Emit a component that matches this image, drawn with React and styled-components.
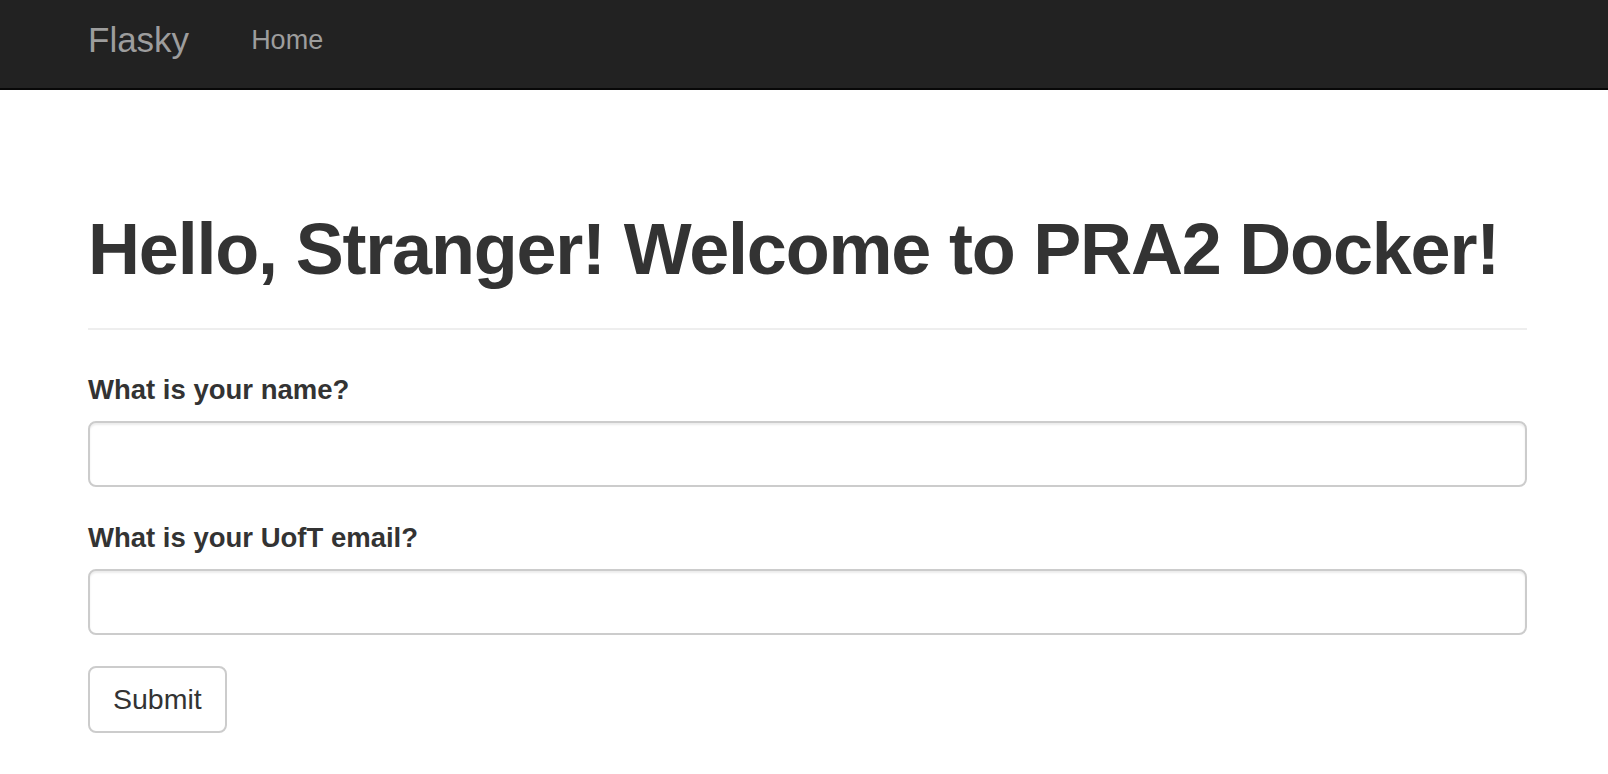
import React from "react";
import styled, { createGlobalStyle } from "styled-components";

const GlobalStyle = createGlobalStyle`
  html, body {
    margin: 0;
    padding: 0;
    background: #fff;
    font-family: "Liberation Sans", Arial, sans-serif;
    color: #333;
  }
`;

const Navbar = styled.nav`
  box-sizing: border-box;
  height: 90px;
  background: #222;
  border-bottom: 2px solid #080808;
  display: flex;
  align-items: flex-start;
  padding: 20px 0 0 88px;
`;

const Brand = styled.a`
  font-size: 35px;
  line-height: 40px;
  color: #9d9d9d;
  text-decoration: none;
  margin-right: 62px;
`;

const NavLink = styled.a`
  font-size: 27px;
  line-height: 40px;
  color: #9d9d9d;
  text-decoration: none;
`;

const Container = styled.main`
  margin-left: 88px;
  width: 1439px;
`;

const PageHeader = styled.div`
  padding-top: 120px;
  padding-bottom: 39px;
  border-bottom: 2px solid #eee;
`;

const Title = styled.h1`
  margin: 0;
  font-size: 72px;
  line-height: 79px;
  font-weight: 700;
  letter-spacing: -1.2px;
  color: #333;
`;

const Form = styled.form`
  padding-top: 40px;
`;

const FormGroup = styled.div`
  margin-bottom: 31px;
`;

const Label = styled.label`
  display: block;
  font-size: 27.5px;
  line-height: 40px;
  font-weight: 700;
  margin-bottom: 11px;
`;

const Input = styled.input`
  display: block;
  box-sizing: border-box;
  width: 100%;
  height: 66px;
  border: 2px solid #ccc;
  border-radius: 8px;
  box-shadow: inset 0 2px 2px rgba(0, 0, 0, 0.075);
  padding: 0 24px;
  font-size: 28px;
  font-family: inherit;
  outline: none;
`;

const Button = styled.button`
  box-sizing: border-box;
  height: 67px;
  padding: 0 23px;
  background: #fff;
  border: 2px solid #ccc;
  border-radius: 8px;
  font-family: inherit;
  font-size: 28.5px;
  line-height: 63px;
  color: #333;
  cursor: pointer;
`;

export default function App() {
  return (
    <>
      <GlobalStyle />
      <Navbar>
        <Brand href="#">Flasky</Brand>
        <NavLink href="#">Home</NavLink>
      </Navbar>
      <Container>
        <PageHeader>
          <Title>Hello, Stranger! Welcome to PRA2 Docker!</Title>
        </PageHeader>
        <Form onSubmit={(e) => e.preventDefault()}>
          <FormGroup>
            <Label htmlFor="name">What is your name?</Label>
            <Input id="name" type="text" />
          </FormGroup>
          <FormGroup>
            <Label htmlFor="email">What is your UofT email?</Label>
            <Input id="email" type="text" />
          </FormGroup>
          <Button type="submit">Submit</Button>
        </Form>
      </Container>
    </>
  );
}
